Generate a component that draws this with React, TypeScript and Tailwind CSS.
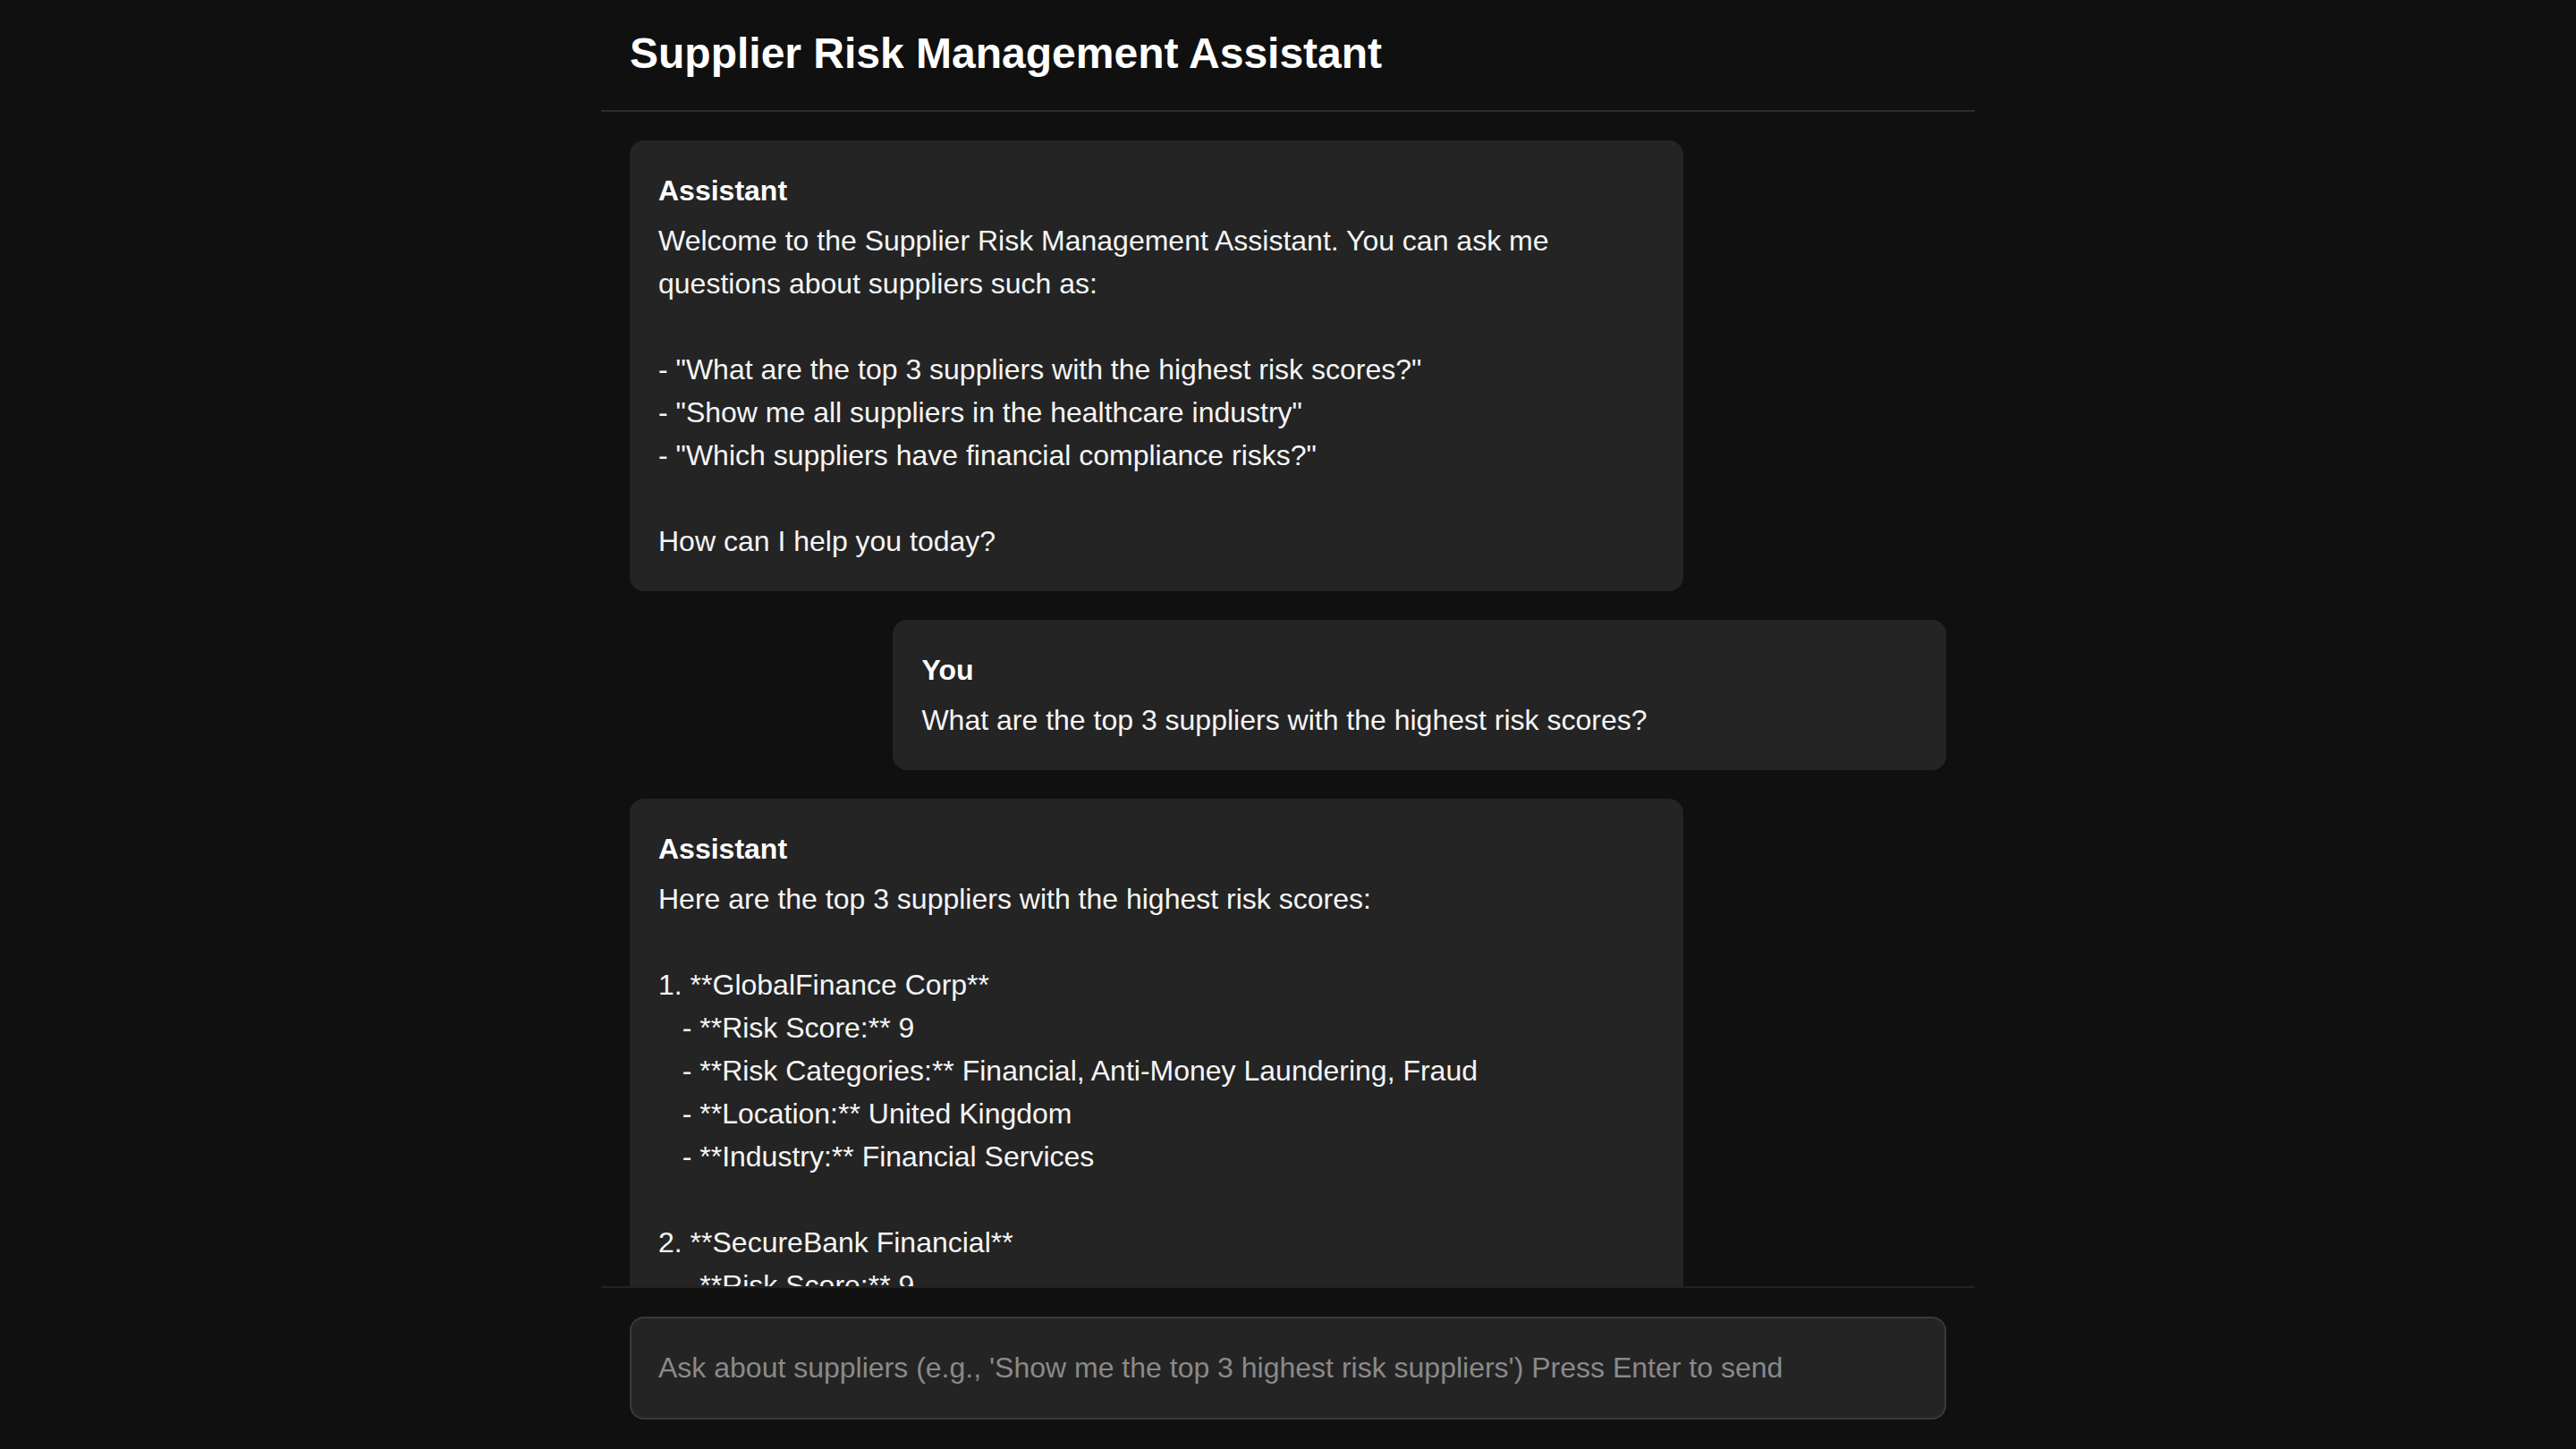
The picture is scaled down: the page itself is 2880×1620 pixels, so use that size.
import React, { useState } from 'react';

// Chat message shape
interface Message {
  role: 'assistant' | 'user';
  content: string;
}

const initialMessages: Message[] = [
  {
    role: 'assistant',
    content:
      'Welcome to the Supplier Risk Management Assistant. You can ask me questions about suppliers such as:\n\n- "What are the top 3 suppliers with the highest risk scores?"\n- "Show me all suppliers in the healthcare industry"\n- "Which suppliers have financial compliance risks?"\n\nHow can I help you today?',
  },
  {
    role: 'user',
    content: 'What are the top 3 suppliers with the highest risk scores?',
  },
  {
    role: 'assistant',
    content:
      'Here are the top 3 suppliers with the highest risk scores:\n\n1. **GlobalFinance Corp**\n   - **Risk Score:** 9\n   - **Risk Categories:** Financial, Anti-Money Laundering, Fraud\n   - **Location:** United Kingdom\n   - **Industry:** Financial Services\n\n2. **SecureBank Financial**\n   - **Risk Score:** 9\n   - **Risk Categories:** Financial, Cybersecurity, Data Privacy\n   - **Location:** United States\n   - **Industry:** Banking\n\n3. **MedSupply Partners**\n   - **Risk Score:** 8\n   - **Risk Categories:** Regulatory, Quality Control\n   - **Location:** Germany\n   - **Industry:** Healthcare',
  },
];

const App: React.FC = () => {
  const [messages] = useState<Message[]>(initialMessages);
  const [input, setInput] = useState<string>('');

  return (
    <div className="h-screen w-full bg-[#101010] text-white font-['Liberation_Sans',Arial,sans-serif]">
      <div className="mx-auto flex h-full max-w-[1536px] flex-col">
        {/* Header */}
        <header className="border-b-2 border-[#2c2c2c] px-8 pt-8 pb-[36px]">
          <h1 className="text-[48px] font-bold leading-[55px] text-white">Supplier Risk Management Assistant</h1>
        </header>

        {/* Messages */}
        <main className="flex flex-1 flex-col gap-8 overflow-hidden p-8">
          {messages.map((m, i) => (
            <div
              key={i}
              className={
                m.role === 'user'
                  ? 'w-[80%] shrink-0 self-end rounded-2xl bg-[#242424] p-8'
                  : 'w-[80%] shrink-0 self-start rounded-2xl bg-[#242424] p-8'
              }
            >
              <div className="mb-2 text-[32px] font-bold leading-[48px]">{m.role === 'user' ? 'You' : 'Assistant'}</div>
              <div className="whitespace-pre-wrap text-[32px] leading-[48px] text-[#f5f5f5]">{m.content}</div>
            </div>
          ))}
        </main>

        {/* Input */}
        <footer className="border-t-2 border-[#222222] px-8 pt-8 pb-[33px]">
          <input
            type="text"
            value={input}
            onChange={(e: React.ChangeEvent<HTMLInputElement>) => setInput(e.target.value)}
            placeholder="Ask about suppliers (e.g., 'Show me the top 3 highest risk suppliers') Press Enter to send"
            className="h-[115px] w-full rounded-2xl border-2 border-[#3a3a3a] bg-[#242424] px-[30px] text-[32px] text-white placeholder:text-[#8a8a8a] focus:outline-none"
          />
        </footer>
      </div>
    </div>
  );
};

export default App;
